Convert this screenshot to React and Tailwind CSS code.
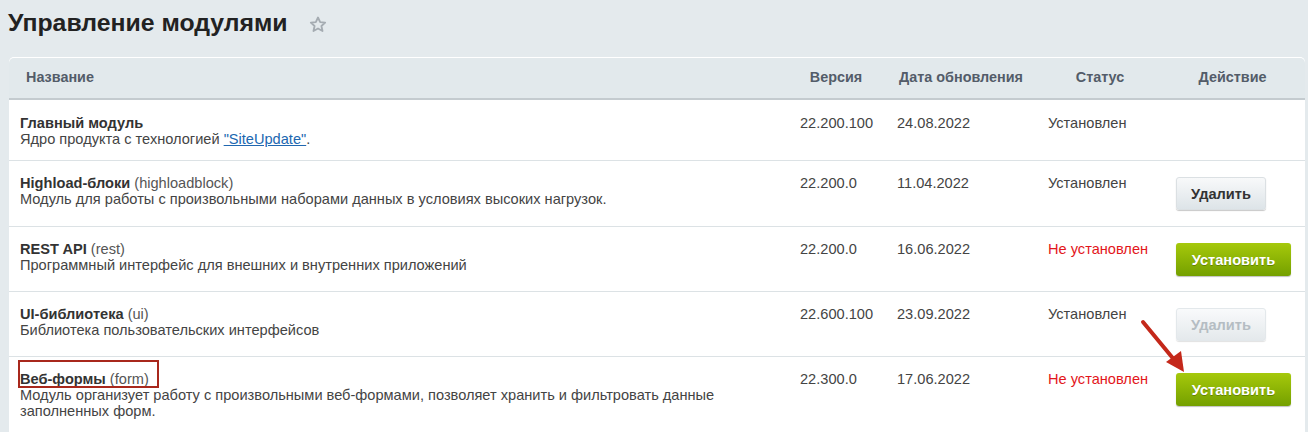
import React from "react";

const cols = "grid grid-cols-[781px_92px_158px_120px_1fr]";

const rows = [
  {
    name: "Главный модуль",
    desc: (
      <>
        Ядро продукта с технологией{" "}
        <a href="#" className="text-[#2067b0] underline">"SiteUpdate"</a>.
      </>
    ),
    version: "22.200.100",
    date: "24.08.2022",
    installed: true,
    action: null,
    pad: "pt-[15px] pb-[13px]",
  },
  {
    name: "Highload-блоки",
    code: "highloadblock",
    desc: "Модуль для работы с произвольными наборами данных в условиях высоких нагрузок.",
    version: "22.200.0",
    date: "11.04.2022",
    installed: true,
    action: "delete",
    pad: "pt-[16px] pb-[16px]",
  },
  {
    name: "REST API",
    code: "rest",
    desc: "Программный интерфейс для внешних и внутренних приложений",
    version: "22.200.0",
    date: "16.06.2022",
    installed: false,
    action: "install",
    pad: "pt-[16px] pb-[15px]",
  },
  {
    name: "UI-библиотека",
    code: "ui",
    desc: "Библиотека пользовательских интерфейсов",
    version: "22.600.100",
    date: "23.09.2022",
    installed: true,
    action: "delete-disabled",
    pad: "pt-[16px] pb-[15px]",
  },
  {
    name: "Веб-формы",
    code: "form",
    desc: (
      <>
        Модуль организует работу с произвольными веб-формами, позволяет хранить и фильтровать данные
        <br />
        заполненных форм.
      </>
    ),
    version: "22.300.0",
    date: "17.06.2022",
    installed: false,
    action: "install",
    marked: true,
    pad: "pt-[16px] pb-[16px]",
  },
];

function ActionButton({ type }) {
  if (type === "install") {
    return (
      <button
        type="button"
        className="h-[33px] w-[115px] rounded-[3px] bg-gradient-to-b from-[#a6c90c] to-[#74a000] text-[14.6px] font-bold text-white shadow-[0_1px_1px_rgba(0,0,0,0.25)] [text-shadow:0_1px_0_rgba(0,0,0,0.25)]"
      >
        Установить
      </button>
    );
  }
  const disabled = type === "delete-disabled";
  return (
    <button
      type="button"
      className={
        disabled
          ? "h-[33px] w-[90px] rounded-[3px] border border-[#e3e8eb] bg-gradient-to-b from-[#f9fafb] to-[#e4e9ec] text-[14.6px] font-bold text-[#b5bdc3] shadow-[0_1px_1px_rgba(0,0,0,0.12)]"
          : "h-[33px] w-[90px] rounded-[3px] border border-[#dbe0e3] bg-gradient-to-b from-[#f8f9fa] to-[#dde4e8] text-[14.6px] font-bold text-[#333] shadow-[0_1px_1px_rgba(0,0,0,0.22)]"
      }
    >
      Удалить
    </button>
  );
}

export default function App() {
  return (
    <div className="relative min-h-[432px] overflow-hidden bg-[#e4eaed] font-['Liberation_Sans',Arial,sans-serif] text-[14.6px] text-[#333]">
      {/* заголовок */}
      <div className="flex items-center pl-[8px] pt-[7px]">
        <h1 className="text-[24.8px] font-bold leading-[32px] text-[#222]">Управление модулями</h1>
        <svg className="ml-[20px] mt-[3px]" width="20" height="20" viewBox="0 0 24 24" fill="none" stroke="#a5acb2" strokeWidth="2.2" strokeLinejoin="round">
          <path d="M12 3l2.6 5.6 6 .6-4.5 4 1.3 6L12 16.2 6.6 19.2l1.3-6-4.5-4 6-.6z" />
        </svg>
      </div>

      {/* таблица */}
      <div className="ml-[9px] mr-[3px] mt-[18px] rounded-t-[5px] border-t border-white bg-white">
        <div className={`${cols} h-[42px] items-center rounded-t-[5px] border-b-2 border-[#c4cbcf] bg-[#e2e9ec] text-[14.4px] font-bold text-[#535c69]`}>
          <div className="pl-[17px]">Название</div>
          <div className="text-center">Версия</div>
          <div className="text-center">Дата обновления</div>
          <div className="text-center">Статус</div>
          <div className="text-center">Действие</div>
        </div>

        {rows.map((r, i) => (
          <div
            key={r.name}
            className={`${cols} ${i < rows.length - 1 ? "border-b border-[#dce2e5]" : ""} ${r.pad} leading-[16px]`}
          >
            <div className={`pl-[11px] ${r.action ? "-mt-[2px]" : ""}`}>
              <div className="relative">
                <span className="font-bold text-[#333]">{r.name}</span>
                {r.code && <span className="text-[#555]"> ({r.code})</span>}
                {r.marked && (
                  <span className="absolute left-[-2px] top-[-11px] h-[28px] w-[141px] border-2 border-[#a8281c]" />
                )}
              </div>
              <div className="text-[#444]">{r.desc}</div>
            </div>
            <div className={`pl-[10px] text-[#444] ${r.action ? "-mt-[2px]" : ""}`}>{r.version}</div>
            <div className={`pl-[15px] text-[#444] ${r.action ? "-mt-[2px]" : ""}`}>{r.date}</div>
            <div className={`pl-[8px] ${r.action ? "-mt-[2px]" : ""} ${r.installed ? "text-[#444]" : "text-[#e3161b]"}`}>
              {r.installed ? "Установлен" : "Не установлен"}
            </div>
            <div className="pl-[16px]">{r.action && <ActionButton type={r.action} />}</div>
          </div>
        ))}
      </div>

      {/* стрелка */}
      <svg className="absolute left-[1136px] top-[316px]" width="56" height="62" viewBox="0 0 56 62">
        <line x1="7" y1="6" x2="40" y2="46" stroke="#c4281a" strokeWidth="4" strokeLinecap="round" />
        <polygon points="48,56 30,46 45,35" fill="#c4281a" />
      </svg>
    </div>
  );
}
